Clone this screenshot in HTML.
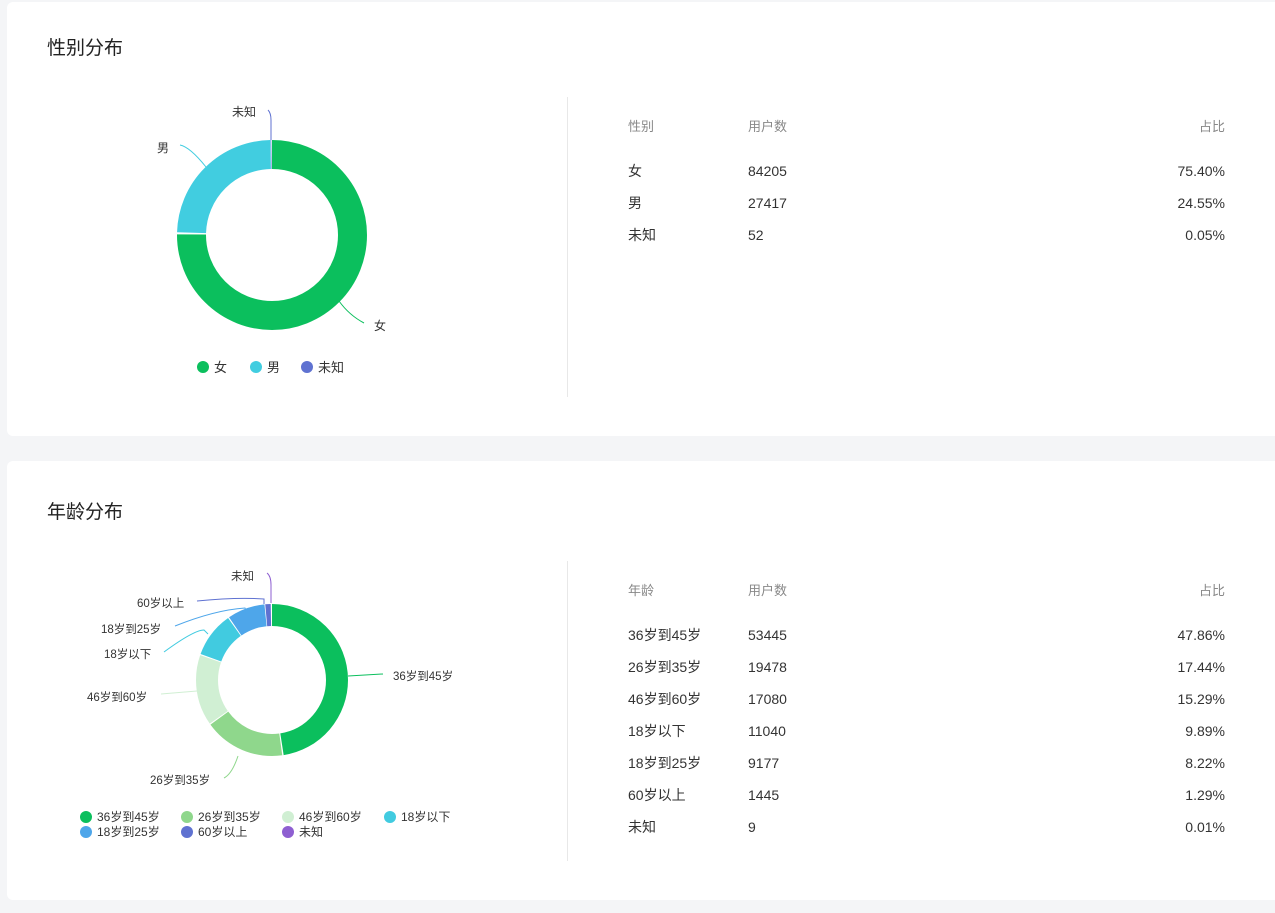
<!DOCTYPE html>
<html><head><meta charset="utf-8"><style>
body{margin:0;width:1275px;height:913px;background:#f4f5f7;font-family:"Liberation Sans","Noto Sans CJK SC",sans-serif;position:relative;overflow:hidden}
.card{position:absolute;left:7px;right:0;background:#fff;border-radius:6px 0 0 6px}
.title{position:absolute;left:40px;font-size:19px;color:#222;line-height:24px}
.div{position:absolute;left:560px;width:1px;background:#e8e8e8}
.t{position:absolute;font-size:14px;color:#333;line-height:20px}
.h{color:#888;font-size:13px}
.r{text-align:right;width:200px}
svg text{font-family:"Liberation Sans","Noto Sans CJK SC",sans-serif;fill:#333}
</style></head><body>
<div class="card" style="top:2px;height:434px">
<div class="title" style="top:35px">性别分布</div>
<div class="div" style="top:95px;height:300px"></div>
</div>
<div class="card" style="top:461px;height:439px">
<div class="title" style="top:40px">年龄分布</div>
<div class="div" style="top:100px;height:300px"></div>
</div>
<svg width="1275" height="913" style="position:absolute;left:0;top:0">
<g transform="rotate(-90 272 235)" fill="none" stroke-width="29">
<circle cx="272" cy="235" r="80.5" pathLength="100" stroke="#0bbf5d" stroke-dasharray="75.2 100"/>
<circle cx="272" cy="235" r="80.5" pathLength="100" stroke="#41cde0" stroke-dasharray="0 75.55 24.3 100"/>
<circle cx="272" cy="235" r="80.5" pathLength="100" stroke="#5f72d1" stroke-dasharray="0 99.9 0.1 100"/>
</g>
<g fill="none" stroke-width="1">
<path d="M268 110 q3 3 3 10 v20" stroke="#5f72d1"/>
<path d="M180 145 q10 2 26 22" stroke="#41cde0"/>
<path d="M339 301 q10 14 25 22" stroke="#0bbf5d"/>
</g>
<g font-size="12"><text x="232" y="116">未知</text><text x="157" y="152">男</text><text x="374" y="330">女</text></g>
<g font-size="13"><circle cx="203" cy="367" r="6" fill="#0bbf5d"/><text x="214" y="372">女</text>
<circle cx="256" cy="367" r="6" fill="#41cde0"/><text x="267" y="372">男</text>
<circle cx="307" cy="367" r="6" fill="#5f72d1"/><text x="318" y="372">未知</text></g>

<g transform="rotate(-90 272 680)" fill="none" stroke-width="22">
<circle cx="272" cy="680" r="65" pathLength="100" stroke="#0bbf5d" stroke-dasharray="47.6 100"/>
<circle cx="272" cy="680" r="65" pathLength="100" stroke="#8fd78c" stroke-dasharray="0 47.9 17.2 100"/>
<circle cx="272" cy="680" r="65" pathLength="100" stroke="#d0efd3" stroke-dasharray="0 65.35 15.05 100"/>
<circle cx="272" cy="680" r="65" pathLength="100" stroke="#41cbe0" stroke-dasharray="0 80.65 9.65 100"/>
<circle cx="272" cy="680" r="65" pathLength="100" stroke="#4ea6ea" stroke-dasharray="0 90.55 7.98 100"/>
<circle cx="272" cy="680" r="65" pathLength="100" stroke="#5f72d1" stroke-dasharray="0 98.7 1.15 100"/>
</g>
<g fill="none" stroke-width="1">
<path d="M267 573 q4 3 4 12 v18" stroke="#8e5fd1"/>
<path d="M197 601 q40 -4 67 -2 v5" stroke="#5f72d1"/>
<path d="M175 626 q40 -16 70 -18 l2 5" stroke="#4ea6ea"/>
<path d="M164 652 q30 -22 40 -22 l4 4" stroke="#41cbe0"/>
<path d="M161 694 l36 -3" stroke="#d0efd3"/>
<path d="M224 778 q8 -4 14 -22" stroke="#8fd78c"/>
<path d="M348 676 l35 -2" stroke="#0bbf5d"/>
</g>
<g font-size="11.5"><text x="231" y="580">未知</text><text x="137" y="607">60岁以上</text><text x="101" y="633">18岁到25岁</text><text x="104" y="658">18岁以下</text><text x="87" y="701">46岁到60岁</text><text x="150" y="784">26岁到35岁</text><text x="393" y="680">36岁到45岁</text></g>
<g font-size="12">
<circle cx="86" cy="817" r="6" fill="#0bbf5d"/><text x="97" y="821">36岁到45岁</text>
<circle cx="187" cy="817" r="6" fill="#8fd78c"/><text x="198" y="821">26岁到35岁</text>
<circle cx="288" cy="817" r="6" fill="#d0efd3"/><text x="299" y="821">46岁到60岁</text>
<circle cx="390" cy="817" r="6" fill="#41cbe0"/><text x="401" y="821">18岁以下</text>
<circle cx="86" cy="832" r="6" fill="#4ea6ea"/><text x="97" y="836">18岁到25岁</text>
<circle cx="187" cy="832" r="6" fill="#5f72d1"/><text x="198" y="836">60岁以上</text>
<circle cx="288" cy="832" r="6" fill="#8e5fd1"/><text x="299" y="836">未知</text>
</g>
</svg>
<div class="t h" style="left:628px;top:117px">性别</div><div class="t h" style="left:748px;top:117px">用户数</div><div class="t h r" style="left:1025px;top:117px">占比</div>
<div class="t" style="left:628px;top:161px">女</div><div class="t" style="left:748px;top:161px">84205</div><div class="t r" style="left:1025px;top:161px">75.40%</div>
<div class="t" style="left:628px;top:193px">男</div><div class="t" style="left:748px;top:193px">27417</div><div class="t r" style="left:1025px;top:193px">24.55%</div>
<div class="t" style="left:628px;top:225px">未知</div><div class="t" style="left:748px;top:225px">52</div><div class="t r" style="left:1025px;top:225px">0.05%</div>

<div class="t h" style="left:628px;top:581px">年龄</div><div class="t h" style="left:748px;top:581px">用户数</div><div class="t h r" style="left:1025px;top:581px">占比</div>
<div class="t" style="left:628px;top:625px">36岁到45岁</div><div class="t" style="left:748px;top:625px">53445</div><div class="t r" style="left:1025px;top:625px">47.86%</div>
<div class="t" style="left:628px;top:657px">26岁到35岁</div><div class="t" style="left:748px;top:657px">19478</div><div class="t r" style="left:1025px;top:657px">17.44%</div>
<div class="t" style="left:628px;top:689px">46岁到60岁</div><div class="t" style="left:748px;top:689px">17080</div><div class="t r" style="left:1025px;top:689px">15.29%</div>
<div class="t" style="left:628px;top:721px">18岁以下</div><div class="t" style="left:748px;top:721px">11040</div><div class="t r" style="left:1025px;top:721px">9.89%</div>
<div class="t" style="left:628px;top:753px">18岁到25岁</div><div class="t" style="left:748px;top:753px">9177</div><div class="t r" style="left:1025px;top:753px">8.22%</div>
<div class="t" style="left:628px;top:785px">60岁以上</div><div class="t" style="left:748px;top:785px">1445</div><div class="t r" style="left:1025px;top:785px">1.29%</div>
<div class="t" style="left:628px;top:817px">未知</div><div class="t" style="left:748px;top:817px">9</div><div class="t r" style="left:1025px;top:817px">0.01%</div>
</body></html>
